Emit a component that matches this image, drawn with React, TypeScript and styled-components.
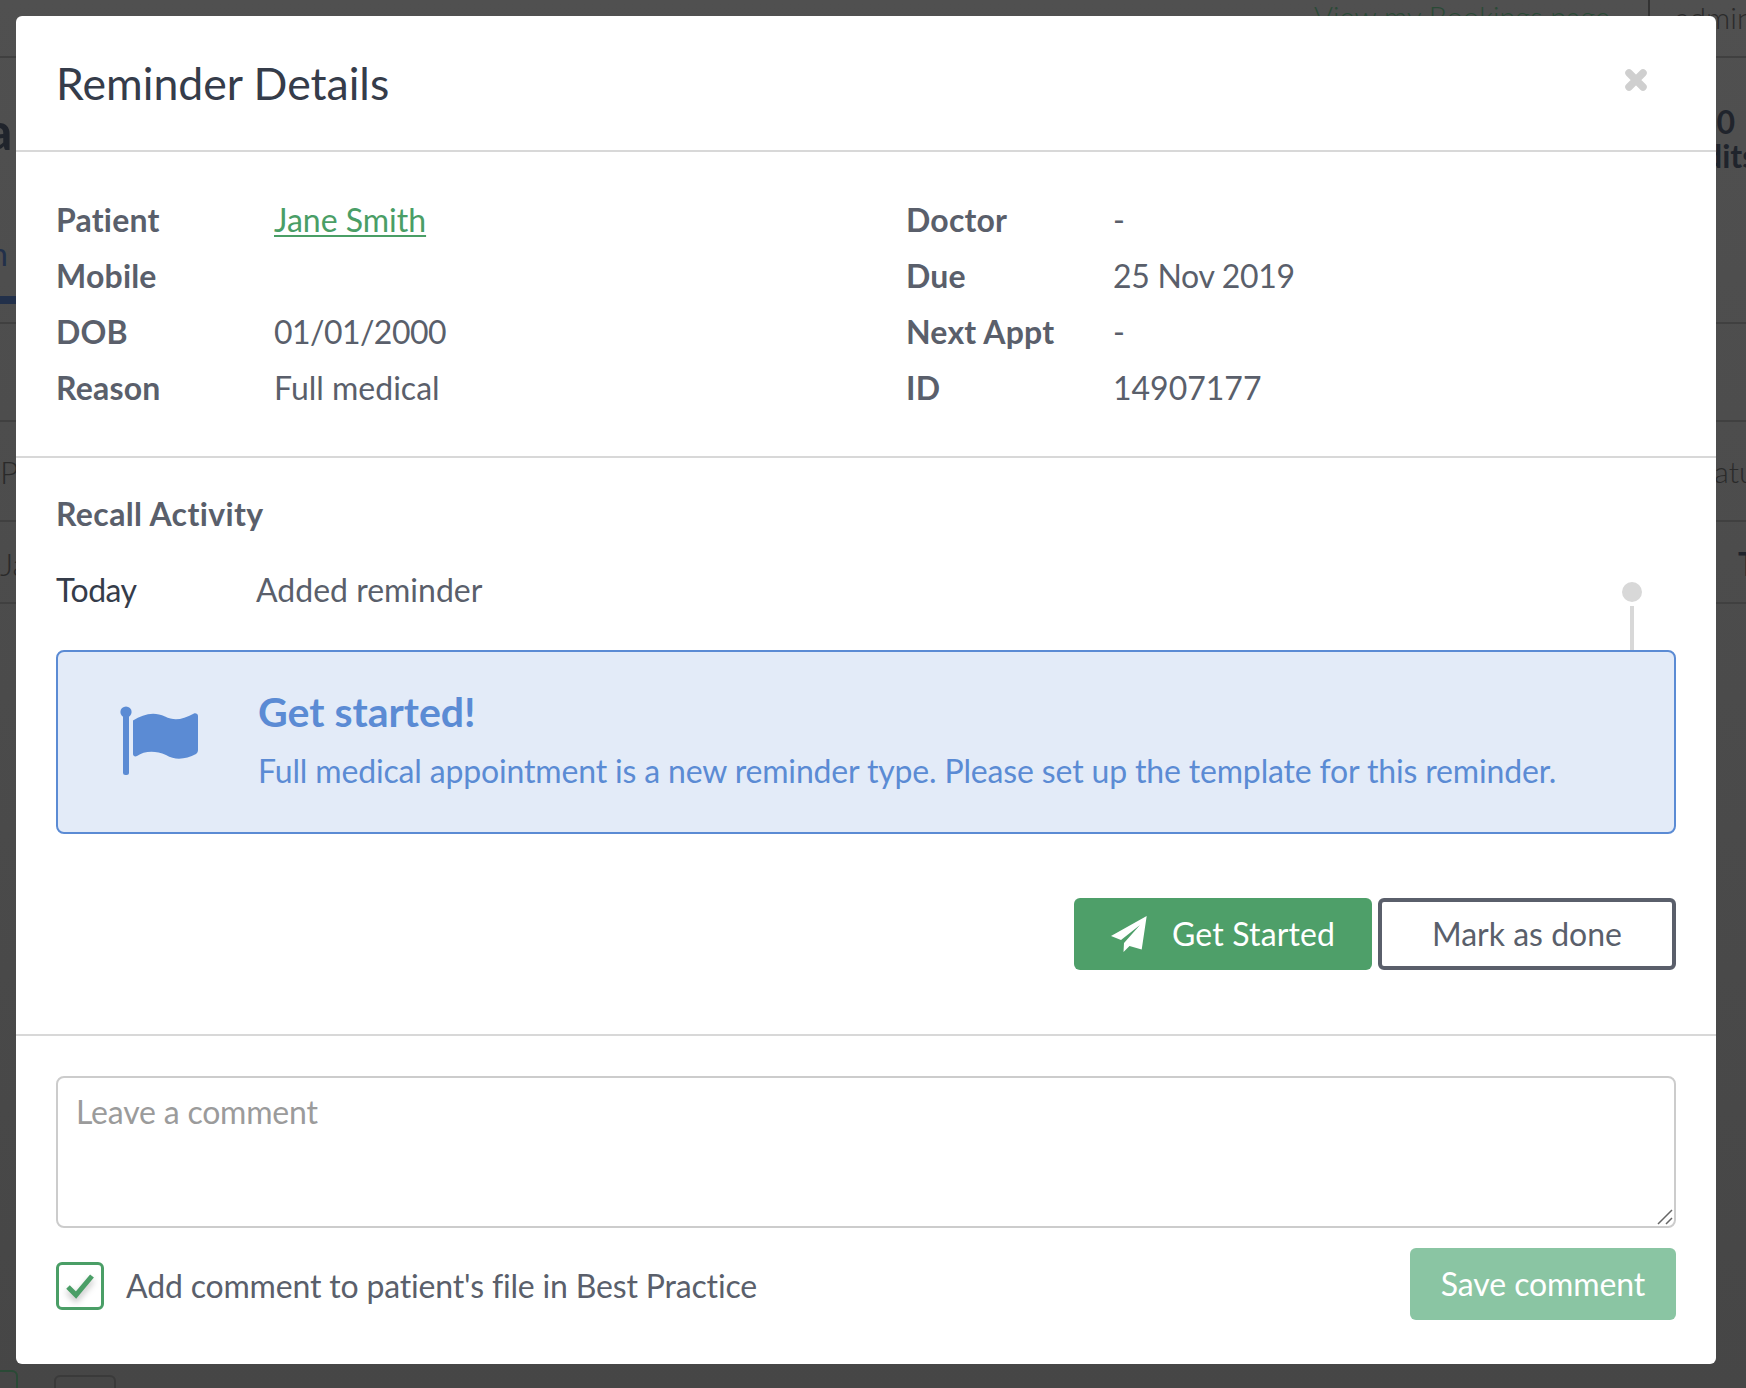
import React from "react";
import styled, { createGlobalStyle } from "styled-components";

const Global = createGlobalStyle`
  html, body { margin: 0; padding: 0; background: #484848; }
  body { font-family: Lato, "Liberation Sans", sans-serif; }
  * { box-sizing: border-box; }
`;

const Page = styled.div`
  position: relative;
  width: 1746px;
  height: 1388px;
  padding: 16px 30px 24px 16px;
  overflow: hidden;
  background: linear-gradient(#505050, #464646);
`;

const Ghost = styled.span<{ $x: number; $y: number; $size: number; $weight?: number; $color?: string }>`
  position: absolute;
  left: ${(p) => p.$x}px;
  top: ${(p) => p.$y}px;
  font-size: ${(p) => p.$size}px;
  font-weight: ${(p) => p.$weight ?? 300};
  line-height: 1;
  color: ${(p) => p.$color ?? "#2a2a2a"};
  white-space: nowrap;
`;

const GhostLine = styled.div<{ $y: number; $h?: number; $x?: number; $w?: number; $color?: string }>`
  position: absolute;
  left: ${(p) => p.$x ?? 0}px;
  top: ${(p) => p.$y}px;
  width: ${(p) => (p.$w ? `${p.$w}px` : "100%")};
  height: ${(p) => p.$h ?? 2}px;
  background: ${(p) => p.$color ?? "#404040"};
`;

const GhostBox = styled.div<{ $x: number; $y: number; $w: number; $color: string }>`
  position: absolute;
  left: ${(p) => p.$x}px;
  top: ${(p) => p.$y}px;
  width: ${(p) => p.$w}px;
  height: 40px;
  border: 2px solid ${(p) => p.$color};
  border-radius: 6px;
`;

const Modal = styled.div`
  position: relative;
  width: 1700px;
  height: 1348px;
  background: #fff;
  border-radius: 6px;
  display: flex;
  flex-direction: column;
  color: #5a5f6b;
`;

const Header = styled.header`
  height: 136px;
  flex: none;
  padding: 0 40px;
  display: flex;
  justify-content: space-between;
  border-bottom: 2px solid #d8d8d8;
`;

const Title = styled.h1`
  margin: 41px 0 0;
  font-size: 44.6px;
  line-height: 52px;
  font-weight: 400;
  color: #353c4a;
`;

const Close = styled.svg`
  width: 22px;
  height: 22px;
  margin: 53px 29px 0 0;
`;

const Details = styled.section`
  height: 306px;
  flex: none;
  padding: 40px 40px 0;
  display: grid;
  grid-template-columns: 850px 1fr;
  border-bottom: 2px solid #d8d8d8;
`;

const InfoGrid = styled.dl<{ $label: number }>`
  margin: 0;
  display: grid;
  grid-template-columns: ${(p) => p.$label}px 1fr;
  grid-auto-rows: 56px;
  align-content: start;
  font-size: 32px;
  line-height: 56px;
`;

const Term = styled.dt`
  font-weight: 700;
  letter-spacing: 0.2px;
`;

const Value = styled.dd<{ $track?: number }>`
  margin: 0;
  letter-spacing: ${(p) => p.$track ?? 0}px;
`;

const PatientLink = styled.a`
  color: #4a9e66;
  text-decoration: underline;
  text-decoration-thickness: 2px;
  text-underline-offset: 3px;
`;

const Activity = styled.section`
  height: 578px;
  flex: none;
  padding: 0 40px;
  display: flex;
  flex-direction: column;
  border-bottom: 2px solid #d8d8d8;
`;

const ActivityTitle = styled.h2`
  margin: 36px 0 0;
  font-size: 32px;
  line-height: 40px;
  font-weight: 700;
  letter-spacing: 0.37px;
`;

const ActivityRow = styled.div`
  margin-top: 36px;
  height: 40px;
  padding-right: 29px;
  display: grid;
  grid-template-columns: 200px 1fr 30px;
  font-size: 32px;
  line-height: 40px;
`;

const ActivityDate = styled.span`
  color: #353c4a;
  letter-spacing: -0.5px;
`;

const Timeline = styled.div`
  display: flex;
  flex-direction: column;
  align-items: center;
  height: 68px;
  margin-top: 12px;
`;

const Dot = styled.span`
  width: 20px;
  height: 20px;
  flex: none;
  border-radius: 50%;
  background: #d8d8d8;
`;

const Stem = styled.span`
  width: 4px;
  flex: 1;
  margin-top: 4px;
  background: #d8d8d8;
`;

const Alert = styled.div`
  margin-top: 40px;
  height: 184px;
  flex: none;
  display: flex;
  align-items: flex-start;
  padding: 0 0 0 62px;
  background: #e3ebf8;
  border: 2px solid #5b8bd4;
  border-radius: 8px;
  color: #5b8bd4;
`;

const FlagIcon = styled.svg`
  width: 78px;
  height: 70px;
  margin-top: 54px;
  flex: none;
`;

const AlertBody = styled.div`
  margin-left: 60px;
  padding-top: 35px;
`;

const AlertTitle = styled.h3`
  margin: 0;
  font-size: 41px;
  line-height: 50px;
  font-weight: 700;
`;

const AlertText = styled.p`
  margin: 12px 0 0;
  font-size: 32px;
  line-height: 44px;
  letter-spacing: -0.16px;
`;

const Actions = styled.div`
  margin-top: 64px;
  display: flex;
  justify-content: flex-end;
  gap: 6px;
`;

const PrimaryButton = styled.button`
  width: 298px;
  height: 72px;
  display: flex;
  align-items: center;
  padding: 0 0 0 36px;
  border: 0;
  border-radius: 6px;
  background: #4e9f69;
  color: #fff;
  font: 400 32px/70px Lato, sans-serif;
  letter-spacing: 0.15px;
`;

const PlaneIcon = styled.svg`
  width: 38px;
  height: 36px;
  margin-right: 24px;
  flex: none;
`;

const OutlineButton = styled.button`
  width: 298px;
  height: 72px;
  padding: 0 0 2px;
  border: 4px solid #5a5f6b;
  border-radius: 6px;
  background: #fff;
  color: #5a5f6b;
  font: 400 32px Lato, sans-serif;
`;

const CommentSection = styled.section`
  flex: 1;
  padding: 40px 40px 0;
  display: flex;
  flex-direction: column;
`;

const CommentWrap = styled.div`
  position: relative;
  height: 152px;
`;

const Comment = styled.textarea`
  display: block;
  width: 100%;
  height: 100%;
  padding: 14px 18px;
  border: 2px solid #cccccc;
  border-radius: 8px;
  outline: 0;
  font: 400 32px/40px Lato, sans-serif;
  letter-spacing: -0.2px;
  color: #5a5f6b;
  resize: none;
  &::placeholder { color: #9b9b9b; opacity: 1; }
`;

const Grip = styled.svg`
  position: absolute;
  right: 3px;
  bottom: 3px;
  width: 16px;
  height: 16px;
  pointer-events: none;
`;

const CommentFooter = styled.div`
  margin-top: 20px;
  display: flex;
  justify-content: space-between;
  align-items: flex-start;
`;

const CheckLabel = styled.label`
  display: flex;
  align-items: center;
  margin-top: 14px;
  gap: 22px;
  font-size: 32px;
  line-height: 48px;
  letter-spacing: -0.17px;
`;

const CheckBox = styled.span`
  width: 48px;
  height: 48px;
  flex: none;
  display: flex;
  align-items: center;
  justify-content: center;
  border: 3px solid #4a9e66;
  border-radius: 6px;
`;

const CheckMark = styled.svg`
  width: 30px;
  height: 28px;
  filter: drop-shadow(0 4px 3px rgba(0, 0, 0, 0.25));
`;

const SaveButton = styled.button`
  width: 266px;
  height: 72px;
  padding: 0 0 2px;
  border: 0;
  border-radius: 6px;
  background: #8ac5a3;
  color: #fff;
  font: 400 32px Lato, sans-serif;
  letter-spacing: -0.1px;
`;

type Row = { term: string; value: React.ReactNode; track?: number };

const leftRows: Row[] = [
  { term: "Patient", value: <PatientLink href="#">Jane Smith</PatientLink> },
  { term: "Mobile", value: "" },
  { term: "DOB", value: "01/01/2000", track: -0.55 },
  { term: "Reason", value: "Full medical" },
];
const rightRows: Row[] = [
  { term: "Doctor", value: "-" },
  { term: "Due", value: "25 Nov 2019", track: -0.3 },
  { term: "Next Appt", value: "-" },
  { term: "ID", value: "14907177" },
];

function Info({ rows, label }: { rows: Row[]; label: number }) {
  return (
    <InfoGrid $label={label}>
      {rows.map((r) => (
        <React.Fragment key={r.term}>
          <Term>{r.term}</Term>
          <Value $track={r.track}>{r.value}</Value>
        </React.Fragment>
      ))}
    </InfoGrid>
  );
}

export default function App() {
  return (
    <Page>
      <Global />
      <GhostLine $y={56} />
      <GhostLine $y={322} />
      <GhostLine $y={420} />
      <GhostLine $y={520} />
      <GhostLine $y={602} />
      <GhostLine $y={296} $h={8} $w={16} $color="#22304a" />
      <Ghost $x={1314} $y={2} $size={29} $color="#2a4a36">View my Bookings page</Ghost>
      <GhostLine $y={0} $x={1648} $w={2} $h={24} $color="#333" />
      <Ghost $x={1675} $y={2} $size={30}>admin</Ghost>
      <Ghost $x={-14} $y={104} $size={52} $weight={700} $color="#20242c">a</Ghost>
      <Ghost $x={-10} $y={238} $size={32} $weight={400} $color="#22304a">n</Ghost>
      <Ghost $x={0} $y={456} $size={32}>P</Ghost>
      <Ghost $x={0} $y={548} $size={32}>Ja</Ghost>
      <Ghost $x={1698} $y={106} $size={32} $weight={700} $color="#20242c">40</Ghost>
      <Ghost $x={1704} $y={140} $size={32} $weight={700} $color="#20242c">dits</Ghost>
      <Ghost $x={1704} $y={456} $size={30}>tatu</Ghost>
      <Ghost $x={1738} $y={548} $size={32} $weight={700} $color="#20242c">T</Ghost>
      <GhostBox $x={-20} $y={1370} $w={38} $color="#2a4a36" />
      <GhostBox $x={54} $y={1375} $w={62} $color="#3a3a3a" />
      <Modal>
        <Header>
          <Title>Reminder Details</Title>
          <Close viewBox="0 0 22 22" aria-hidden>
            <path d="M4 4 18 18M18 4 4 18" fill="none" stroke="#cfcfcf" strokeWidth="7.5" strokeLinecap="round" />
          </Close>
        </Header>
        <Details>
          <Info rows={leftRows} label={218} />
          <Info rows={rightRows} label={207} />
        </Details>
        <Activity>
          <ActivityTitle>Recall Activity</ActivityTitle>
          <ActivityRow>
            <ActivityDate>Today</ActivityDate>
            <span>Added reminder</span>
            <Timeline>
              <Dot />
              <Stem />
            </Timeline>
          </ActivityRow>
          <Alert>
            <FlagIcon viewBox="0 0 78 70" aria-hidden>
              <circle cx="6" cy="6" r="5.6" fill="#5b8bd4" />
              <rect x="3" y="8" width="6" height="61" rx="2.5" fill="#5b8bd4" />
              <path d="M13 14.5C23 8 34 5 45 10.5 54 15 62 14 74 7.5 76 7 78 8 78 10V44C78 46 77 47 76 48 66 53 56 55 46 49 35 44 24 45 17 50 15 51 13 50 13 48Z" fill="#5b8bd4" />
            </FlagIcon>
            <AlertBody>
              <AlertTitle>Get started!</AlertTitle>
              <AlertText>Full medical appointment is a new reminder type. Please set up the template for this reminder.</AlertText>
            </AlertBody>
          </Alert>
          <Actions>
            <PrimaryButton>
              <PlaneIcon viewBox="0 0 38 36" aria-hidden>
                <path d="M36.7 0 1 20 11 24 30 9 14 27 13.5 36 19.5 30 31.7 33.5Z" fill="#fff" />
              </PlaneIcon>
              Get Started
            </PrimaryButton>
            <OutlineButton>Mark as done</OutlineButton>
          </Actions>
        </Activity>
        <CommentSection>
          <CommentWrap>
            <Comment placeholder="Leave a comment" />
            <Grip viewBox="0 0 16 16" aria-hidden>
              <path d="M1 15 15 1M9 15 15 9" stroke="#666" strokeWidth="1.5" fill="none" />
            </Grip>
          </CommentWrap>
          <CommentFooter>
            <CheckLabel>
              <CheckBox>
                <CheckMark viewBox="0 0 30 28" aria-hidden>
                  <path d="M3 15 11 23 27 4" fill="none" stroke="#4a9e66" strokeWidth="5" />
                </CheckMark>
              </CheckBox>
              Add comment to patient's file in Best Practice
            </CheckLabel>
            <SaveButton>Save comment</SaveButton>
          </CommentFooter>
        </CommentSection>
      </Modal>
    </Page>
  );
}
